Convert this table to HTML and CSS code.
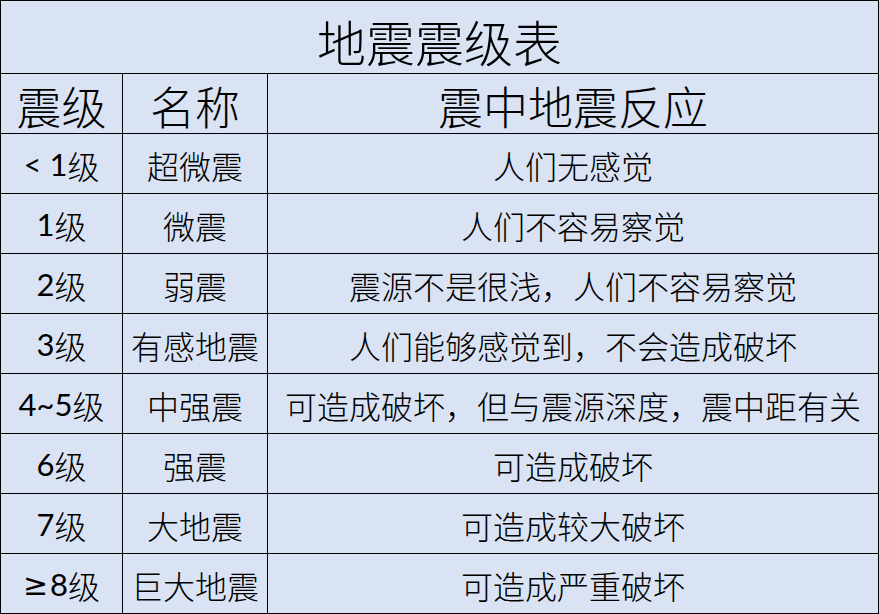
FILE: index.html
```html
<!DOCTYPE html>
<html lang="zh-CN">
<head>
<meta charset="utf-8">
<title>地震震级表</title>
<link rel="stylesheet" href="styles.css">
</head>
<body>
<div class="table">
  <div class="cell title">地震震级表</div>
  <div class="cell head">震级</div>
  <div class="cell head">名称</div>
  <div class="cell head">震中地震反应</div>

  <div class="cell lvl">&lt; 1<span class="cjk">级</span></div>
  <div class="cell">超微震</div>
  <div class="cell">人们无感觉</div>

  <div class="cell lvl">1<span class="cjk">级</span></div>
  <div class="cell">微震</div>
  <div class="cell">人们不容易察觉</div>

  <div class="cell lvl">2<span class="cjk">级</span></div>
  <div class="cell">弱震</div>
  <div class="cell">震源不是很浅，人们不容易察觉</div>

  <div class="cell lvl">3<span class="cjk">级</span></div>
  <div class="cell">有感地震</div>
  <div class="cell">人们能够感觉到，不会造成破坏</div>

  <div class="cell lvl">4~5<span class="cjk">级</span></div>
  <div class="cell">中强震</div>
  <div class="cell">可造成破坏，但与震源深度，震中距有关</div>

  <div class="cell lvl">6<span class="cjk">级</span></div>
  <div class="cell">强震</div>
  <div class="cell">可造成破坏</div>

  <div class="cell lvl">7<span class="cjk">级</span></div>
  <div class="cell">大地震</div>
  <div class="cell">可造成较大破坏</div>

  <div class="cell lvl"><span class="sym">≥</span>8<span class="cjk">级</span></div>
  <div class="cell">巨大地震</div>
  <div class="cell">可造成严重破坏</div>
</div>
</body>
</html>
```

FILE: styles.css
```css
html, body {
  margin: 0;
  padding: 0;
  background: #dae3f3;
}

.table {
  width: 879px;
  height: 614px;
  box-sizing: border-box;
  display: grid;
  grid-template-columns: 121px 144px 610px;
  grid-template-rows: 72px repeat(9, 59px);
  gap: 1px;
  padding: 1px;
  background: #000;
  font-family: "Noto Sans CJK SC", sans-serif;
  font-weight: 300;
  color: #000;
}

.cell {
  background: #dae3f3;
  display: flex;
  align-items: center;
  justify-content: center;
  font-size: 32px;
  line-height: 1;
  white-space: nowrap;
  padding-top: 2px;
  box-sizing: border-box;
}

.title {
  grid-column: 1 / 4;
  font-size: 49px;
  padding-top: 6px;
}

.head {
  font-size: 45px;
  padding-top: 4px;
}

.lvl {
  font-family: "Lato", "Noto Sans CJK SC", sans-serif;
  font-weight: 400;
  font-size: 31px;
}

.lvl .cjk {
  font-family: "Noto Sans CJK SC", sans-serif;
  font-weight: 300;
  font-size: 32px;
}

.lvl .sym {
  font-family: "DejaVu Sans", sans-serif;
  font-weight: 400;
  font-size: 30px;
  margin-right: 2px;
}
```
